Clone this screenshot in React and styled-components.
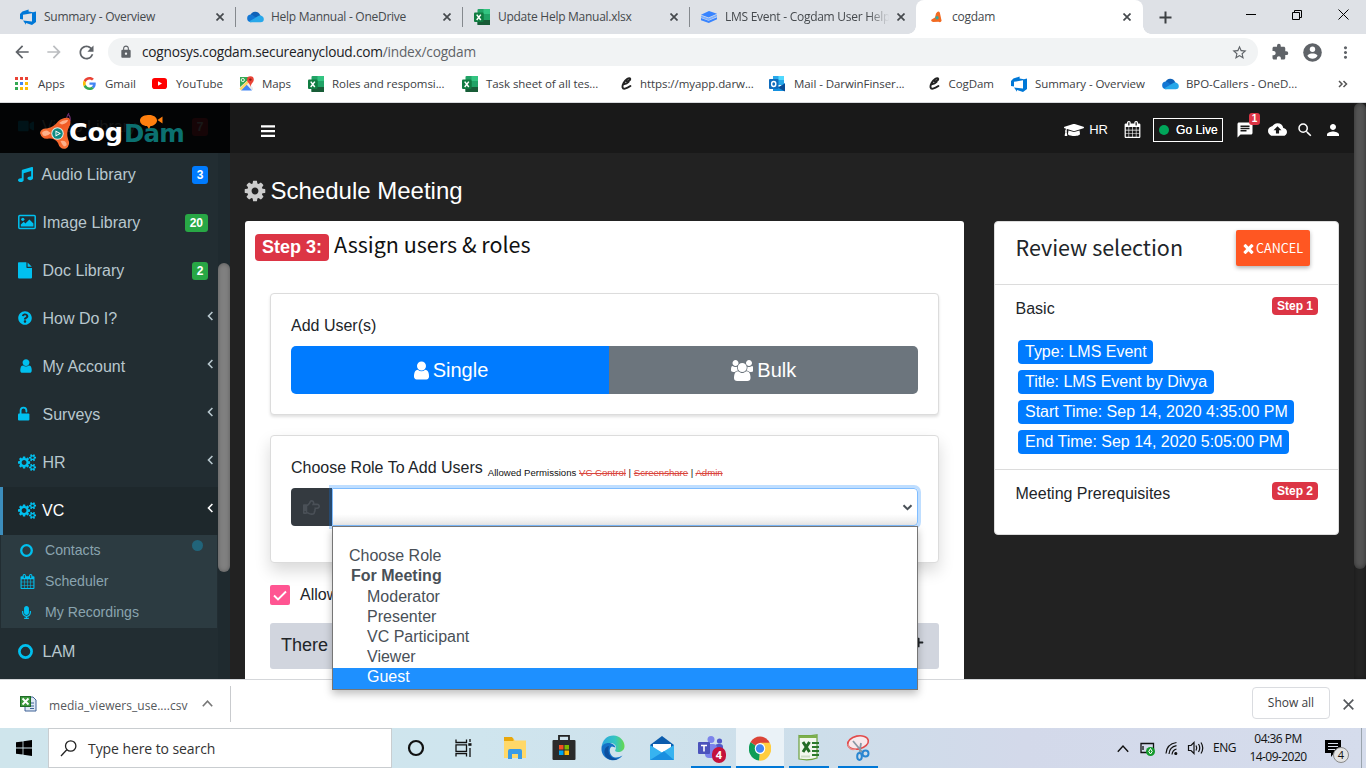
import React from "react";
import styled, { createGlobalStyle, css } from "styled-components";
import {
  FaVideo, FaMusic, FaQuestionCircle, FaMicrophone, FaGraduationCap,
  FaRegHandPointRight, FaPlus,
} from "react-icons/fa";
import {
  MdChat, MdBackup, MdSearch, MdPerson, MdLock, MdStarBorder, MdExtension,
  MdMoreVert, MdArrowBack, MdArrowForward, MdRefresh,
} from "react-icons/md";

const Global = createGlobalStyle`
  * { box-sizing: border-box; }
  html, body { margin: 0; padding: 0; overflow: hidden; }
  body { font-family: "Liberation Sans", Arial, sans-serif; }
  svg { display: block; flex: none; }
`;

const ui = css`font-family: "Open Sans", "Noto Sans", sans-serif;`;

const Screen = styled.div`
  width: 1366px;
  height: 768px;
  display: flex;
  flex-direction: column;
  overflow: hidden;
  background: #fff;
`;

/* ---------- icons ---------- */

const FA = {
  user: [1792, "M1536 1399q0 109-62.5 187t-150.5 78h-854q-88 0-150.5-78t-62.5-187q0-85 8.5-160.5t31.5-152 58.5-131 94-89 134.5-34.5q131 128 313 128t313-128q76 0 134.5 34.5t94 89 58.5 131 31.5 152 8.5 160.5zm-256-887q0 159-112.5 271.5t-271.5 112.5-271.5-112.5-112.5-271.5 112.5-271.5 271.5-112.5 271.5 112.5 112.5 271.5z"],
  cog: [1792, "M1152 896q0-106-75-181t-181-75-181 75-75 181 75 181 181 75 181-75 75-181zm512-109v222q0 12-8 23t-20 13l-185 28q-19 54-39 91 35 50 107 138 10 12 10 25t-9 23q-27 37-99 108t-94 71q-12 0-26-9l-138-108q-44 23-91 38-16 136-29 186-7 28-36 28h-222q-14 0-24.5-8.5t-11.5-21.5l-28-184q-49-16-90-37l-141 107q-10 9-25 9-14 0-25-11-126-114-165-168-7-10-7-23 0-12 8-23 15-21 51-66.5t54-70.5q-27-50-41-99l-183-27q-13-2-21-12.5t-8-23.5v-222q0-12 8-23t19-13l186-28q14-46 39-92-40-57-107-138-10-12-10-24 0-10 9-23 26-36 98.5-107.5t94.5-71.5q13 0 26 10l138 107q44-23 91-38 16-136 29-186 7-28 36-28h222q14 0 24.5 8.5t11.5 21.5l28 184q49 16 90 37l142-107q9-9 24-9 13 0 25 10 129 119 165 170 7 8 7 22 0 12-8 23-15 21-51 66.5t-54 70.5q26 50 41 98l183 28q13 2 21 12.5t8 23.5z"],
  cogs: [1920, "M896 896q0-106-75-181t-181-75-181 75-75 181 75 181 181 75 181-75 75-181zm768 512q0-52-38-90t-90-38-90 38-38 90q0 53 37.5 90.5t90.5 37.5 90.5-37.5 37.5-90.5zm0-1024q0-52-38-90t-90-38-90 38-38 90q0 53 37.5 90.5t90.5 37.5 90.5-37.5 37.5-90.5zm-384 421v185q0 10-7 19.5t-16 10.5l-155 24q-11 35-32 76 34 48 90 115 7 11 7 20 0 12-7 19-23 30-82.5 89.5t-78.5 59.5q-11 0-21-7l-115-90q-37 19-77 31-11 108-23 155-7 24-30 24h-186q-11 0-20-7.5t-10-17.5l-23-153q-34-10-75-31l-118 89q-7 7-20 7-11 0-21-8-144-133-144-160 0-9 7-19 10-14 41-53t47-61q-23-44-35-82l-152-24q-10-1-17-9.5t-7-19.5v-185q0-10 7-19.5t16-10.5l155-24q11-35 32-76-34-48-90-115-7-11-7-20 0-12 7-20 22-30 82-89t79-59q11 0 21 7l115 90q34-18 77-32 11-108 23-154 7-24 30-24h186q11 0 20 7.5t10 17.5l23 153q34 10 75 31l118-89q8-7 20-7 11 0 21 8 144 133 144 160 0 8-7 19-12 16-42 54t-45 60q23 48 34 82l152 23q10 2 17 10.5t7 19.5zm640 533v140q0 16-149 31-12 27-30 52 51 113 51 138 0 4-4 7-122 71-124 71-8 0-46-47t-52-68q-20 2-30 2t-30-2q-14 21-52 68t-46 47q-2 0-124-71-4-3-4-7 0-25 51-138-18-25-30-52-149-15-149-31v-140q0-16 149-31 13-29 30-52-51-113-51-138 0-4 4-7 4-2 35-20t59-34 30-16q8 0 46 46.5t52 67.5q20-2 30-2t30 2q51-71 92-112l6-2q4 0 124 70 4 3 4 7 0 25-51 138 17 23 30 52 149 15 149 31zm0-1024v140q0 16-149 31-12 27-30 52 51 113 51 138 0 4-4 7-122 71-124 71-8 0-46-47t-52-68q-20 2-30 2t-30-2q-14 21-52 68t-46 47q-2 0-124-71-4-3-4-7 0-25 51-138-18-25-30-52-149-15-149-31v-140q0-16 149-31 13-29 30-52-51-113-51-138 0-4 4-7 4-2 35-20t59-34 30-16q8 0 46 46.5t52 67.5q20-2 30-2t30 2q51-71 92-112l6-2q4 0 124 70 4 3 4 7 0 25-51 138 17 23 30 52 149 15 149 31z"],
  users: [1920, "M593 896q-162 5-265 128h-134q-82 0-138-40.5t-56-118.5q0-353 124-353 6 0 43.5 21t97.5 42.5 119 21.5q67 0 133-23-5 37-5 66 0 139 81 256zm1071 637q0 120-73 189.5t-194 69.5h-874q-121 0-194-69.5t-73-189.5q0-53 3.5-103.5t14-109 26.5-108.5 43-97.5 62-81 85.5-53.5 111.5-20q10 0 43 21.5t73 48 107 48 135 21.5 135-21.5 107-48 73-48 43-21.5q61 0 111.5 20t85.5 53.5 62 81 43 97.5 26.5 108.5 14 109 3.5 103.5zm-1024-1277q0 106-75 181t-181 75-181-75-75-181 75-181 181-75 181 75 75 181zm704 384q0 159-112.5 271.5t-271.5 112.5-271.5-112.5-112.5-271.5 112.5-271.5 271.5-112.5 271.5 112.5 112.5 271.5zm576 225q0 78-56 118.5t-138 40.5h-134q-103-123-265-128 81-117 81-256 0-29-5-66 66 23 133 23 59 0 119-21.5t97.5-42.5 43.5-21q124 0 124 353zm-128-609q0 106-75 181t-181 75-181-75-75-181 75-181 181-75 181 75 75 181z"],
  calendar: [1792, "M192 1664h288v-288h-288v288zm352 0h320v-288h-320v288zm-352-352h288v-320h-288v320zm352 0h320v-320h-320v320zm-352-384h288v-288h-288v288zm736 736h320v-288h-320v288zm-384-736h320v-288h-320v288zm768 736h288v-288h-288v288zm-384-352h320v-320h-320v320zm-352-864v-288q0-13-9.5-22.5t-22.5-9.5h-64q-13 0-22.5 9.5t-9.5 22.5v288q0 13 9.5 22.5t22.5 9.5h64q13 0 22.5-9.5t9.5-22.5zm736 864h288v-320h-288v320zm-384-384h320v-288h-320v288zm384 0h288v-288h-288v288zm32-480v-288q0-13-9.5-22.5t-22.5-9.5h-64q-13 0-22.5 9.5t-9.5 22.5v288q0 13 9.5 22.5t22.5 9.5h64q13 0 22.5-9.5t9.5-22.5zm384-64v1280q0 52-38 90t-90 38h-1408q-52 0-90-38t-38-90v-1280q0-52 38-90t90-38h128v-96q0-66 47-113t113-47h64q66 0 113 47t47 113v96h384v-96q0-66 47-113t113-47h64q66 0 113 47t47 113v96h128q52 0 90 38t38 90z"],
  times: [1792, "M1490 1322q0 40-28 68l-136 136q-28 28-68 28t-68-28l-294-294-294 294q-28 28-68 28t-68-28l-136-136q-28-28-28-68t28-68l294-294-294-294q-28-28-28-68t28-68l136-136q28-28 68-28t68 28l294 294 294-294q28-28 68-28t68 28l136 136q28 28 28 68t-28 68l-294 294 294 294q28 28 28 68z"],
};
const Fa4 = ({ name, size }) => (
  <svg width={(size * FA[name][0]) / 1792} height={size} viewBox={`0 0 ${FA[name][0]} 1792`} fill="currentColor">
    <path d={FA[name][1]} />
  </svg>
);

const PictureIcon = () => (
  <svg width="18" height="16" viewBox="0 0 18 16">
    <rect x="0.8" y="1.6" width="16.4" height="12.8" rx="1" fill="none" stroke="currentColor" strokeWidth="1.5" />
    <circle cx="4.8" cy="5.3" r="1.6" fill="currentColor" />
    <path d="M2.8 12.6v-2l3-2.8 1.6 1.6 4-4 4 4v3.2z" fill="currentColor" />
  </svg>
);
const UnlockIcon = () => (
  <svg width="12" height="16" viewBox="0 0 12 16">
    <path d="M2.6 8V4.6a2.9 2.9 0 0 1 5.8 0v1" fill="none" stroke="currentColor" strokeWidth="1.8" strokeLinecap="round" />
    <rect x="0" y="7.4" width="11.4" height="7.2" rx="1" fill="currentColor" />
  </svg>
);
const RingIcon = ({ size = 14 }) => (
  <svg width={size} height={size} viewBox="0 0 14 14">
    <circle cx="7" cy="7" r="5.7" fill="none" stroke="currentColor" strokeWidth="2.5" />
  </svg>
);
const FileIcon = () => (
  <svg width="14" height="17" viewBox="0 0 14 17" fill="currentColor">
    <path d="M0 1Q0 0.2 0.8 0.2H8.4V5.2Q8.4 6 9.2 6H14V15.6Q14 16.6 13 16.6H1Q0 16.6 0 15.6ZM9.6 0.4L13.8 4.8H9.6Z" />
  </svg>
);
const AngleLeft = () => (
  <svg width="7" height="10" viewBox="0 0 7 10">
    <path d="M5.4 1L1.5 5l3.9 4" fill="none" stroke="currentColor" strokeWidth="1.6" />
  </svg>
);
const DevOpsIcon = () => (
  <svg width="16" height="16" viewBox="0 0 16 16" fill="#0078d7">
    <path d="M0 5L2.4 2.6 8.6 0.6V2.5L13 3.3L16 2.5V13L12 16L6 14V15.8L3 11.6L12 12.4V4.3L3 5.8V10.5L0 10Z" />
  </svg>
);
const CloudIcon = () => (
  <svg width="17" height="12" viewBox="0 0 17 12">
    <path d="M3.4 4.2A5.2 5.2 0 0 1 13 3.8L15 8 3 10Z" fill="#0f62b8" />
    <path d="M0.2 7.6A3.6 3.6 0 0 1 5.6 4l7 5.5L3.6 11.2A3.6 3.6 0 0 1 0.2 7.6Z" fill="#1377d4" />
    <path d="M2 10.4L12.2 4.6A3.6 3.6 0 0 1 16.8 8a3.2 3.2 0 0 1-3.2 3.2H3.6Z" fill="#28a8ea" />
  </svg>
);
const ExcelIcon = () => (
  <svg width="16" height="16" viewBox="0 0 16 16">
    <rect x="3.5" y="0" width="12.5" height="16" rx="1" fill="#21a366" />
    <rect x="9.5" y="0" width="6.5" height="5" fill="#33c481" />
    <rect x="3.5" y="5" width="6" height="6" fill="#107c41" />
    <rect x="3.5" y="11" width="12.5" height="5" fill="#185c37" />
    <rect x="0" y="3.5" width="9.5" height="9.5" rx="1" fill="#107c41" />
    <path d="M2.7 5.6L6.8 11M6.8 5.6L2.7 11" stroke="#fff" strokeWidth="1.5" />
  </svg>
);
const BookIcon = () => (
  <svg width="16" height="12" viewBox="0 0 16 12">
    <path d="M8 0L16 2.8 7.6 6.4 0 3.8Z" fill="#3884ff" />
    <path d="M0 4.6L7.6 7.2 16 3.6V5.4L7.6 9.2 0 6.4Z" fill="#7db0ff" />
    <path d="M0 7L7.6 9.8 16 6.2V8.2L7.8 12 0 9.2Z" fill="#3884ff" />
  </svg>
);
const CogdamFav = () => (
  <svg width="11" height="12" viewBox="0 0 11 12">
    <path d="M5 2.4Q7.4 -1.2 8.8 1.6L10.6 9.8Q9.8 12 7.4 10.8L2 11Q-0.8 10 0.6 8.4L4 6.4Z" fill="#f26a21" />
    <circle cx="6" cy="6.8" r="1.7" fill="#35a7a0" />
  </svg>
);
const GoogleIcon = () => (
  <svg width="13" height="13" viewBox="0 0 48 48">
    <path fill="#EA4335" d="M24 9.5c3.5 0 6.700 1.200 9.200 3.600l6.900-6.900C35.900 2.400 30.500 0 24 0 14.600 0 6.500 5.400 2.600 13.200l8 6.200C12.400 13.700 17.700 9.500 24 9.500z" />
    <path fill="#4285F4" d="M47 24.500c0-1.600-.2-3.100-.4-4.500H24v9h12.900c-.6 3-2.200 5.500-4.800 7.200l7.700 6C44.400 38 47 31.800 47 24.500z" />
    <path fill="#FBBC05" d="M10.500 28.600a14.500 14.500 0 0 1 0-9.200l-8-6.200a24 24 0 0 0 0 21.600z" />
    <path fill="#34A853" d="M24 48c6.500 0 11.900-2.100 15.900-5.800l-7.700-6c-2.200 1.500-4.900 2.300-8.200 2.300-6.300 0-11.600-4.200-13.500-9.900l-8 6.200C6.500 42.600 14.600 48 24 48z" />
  </svg>
);
const YouTubeIcon = () => (
  <svg width="15" height="11" viewBox="0 0 15 11">
    <rect width="15" height="11" rx="2.8" fill="#f00" />
    <path d="M6 3.200V7.800L10 5.500Z" fill="#fff" />
  </svg>
);
const MapsIcon = () => (
  <svg width="15" height="15" viewBox="0 0 15 15">
    <path d="M1 1H12L1 12Z" fill="#34a853" />
    <path d="M1 13V11L8 5 14 12V14H2Z" fill="#e8eaed" />
    <path d="M2 14.500L7.500 8.500 13 14.500Z" fill="#4285f4" />
    <path d="M0.500 12.500L9.500 3.500 11 5.500 2 14.500Z" fill="#fdd663" />
    <path d="M8 3.600a3.400 3.400 0 0 1 6.800 0C14.800 6.500 11.900 7.500 11.600 11 11 7.500 8 6.500 8 3.600Z" fill="#ea4335" />
    <circle cx="11.400" cy="3.600" r="1.200" fill="#8c1b12" />
    <circle cx="3.800" cy="4" r="1.600" fill="none" stroke="#fff" strokeWidth="0.900" />
  </svg>
);
const OutlookIcon = () => (
  <svg width="16" height="16" viewBox="0 0 16 16">
    <rect x="4" y="0" width="11" height="9" fill="#28a8ea" />
    <rect x="9.500" y="0" width="5.500" height="4" fill="#50d9ff" />
    <path d="M4 7L10 11 16 7V15H4Z" fill="#1490df" />
    <path d="M9 11.500L16 7.500V15.500Z" fill="#0a4a94" />
    <rect x="0" y="3" width="9.500" height="10" rx="1" fill="#0f6cbd" />
    <ellipse cx="4.700" cy="8" rx="2.100" ry="2.500" fill="none" stroke="#fff" strokeWidth="1.400" />
  </svg>
);
const ScriptCIcon = () => (
  <svg width="11" height="13" viewBox="0 0 11 13">
    <path d="M5 3.600C6 5 9.600 3.500 9.200 1.800 8.600 0 4.400 2.400 2.600 6 0.600 10 1.400 12.200 4 11.600 6 11.200 8 10 9.400 9M2.600 7.200Q6 6.600 7.600 4.800" fill="none" stroke="#222" strokeWidth="1.900" strokeLinecap="round" />
  </svg>
);
const AccountIcon = () => (
  <svg width="19" height="19" viewBox="0 0 19 19">
    <circle cx="9.500" cy="9.500" r="9.300" fill="#5f6368" />
    <circle cx="9.500" cy="6.200" r="2.700" fill="#fff" />
    <path d="M4.400 12.800C5 11 7.700 10.500 9.500 10.500S14 11 14.600 12.800A6 6 0 0 1 4.400 12.800Z" fill="#fff" />
  </svg>
);
const AppsIcon = () => {
  const c = ["#ea4335", "#ea4335", "#ea4335", "#34a853", "#4285f4", "#fbbc05", "#34a853", "#fbbc05", "#fbbc05"];
  return (
    <svg width="13" height="13" viewBox="0 0 13 13">
      {c.map((f, i) => <rect key={i} x={(i % 3) * 5} y={Math.floor(i / 3) * 5} width="3" height="3" fill={f} />)}
    </svg>
  );
};
const CrossIcon = ({ size = 8, width = 1.700 }) => (
  <svg width={size} height={size} viewBox="0 0 8 8">
    <path d="M0.500 0.500L7.500 7.500M7.500 0.500L0.500 7.500" stroke="currentColor" strokeWidth={width} />
  </svg>
);

/* ---------- browser chrome ---------- */

const TabStrip = styled.div`
  ${ui}
  height: 34px;
  flex: none;
  display: flex;
  background: #dee1e6;
`;
const Tab = styled.div`
  width: ${(p) => (p.$first ? 236 : 227)}px;
  margin-left: ${(p) => (p.$active ? -1 : 0)}px;
  padding: 0 12px 0 ${(p) => (p.$first ? 20 : p.$active ? 15 : 11)}px;
  display: flex;
  align-items: center;
  color: #45494d;
  font-size: 12px;
  position: relative;
  ${(p) => p.$active && css`
    background: #fff;
    border-radius: 8px 8px 0 0;
    &::before, &::after {
      content: "";
      position: absolute;
      bottom: 0;
      width: 8px;
      height: 8px;
    }
    &::before { left: -8px; background: radial-gradient(circle at 0 0, #dee1e6 7.500px, #fff 8px); }
    &::after { right: -8px; background: radial-gradient(circle at 100% 0, #dee1e6 7.500px, #fff 8px); }
  `}
  ${(p) => p.$line && css`
    &::after {
      content: "";
      position: absolute;
      right: 0;
      top: 7px;
      width: 1px;
      height: 20px;
      background: #85898e;
    }
  `}
`;
const TabIcon = styled.span`
  width: ${(p) => (p.$active ? 21 : 24)}px;
  flex: none;
  display: flex;
`;
const TabTitle = styled.span`
  flex: 1;
  min-width: 0;
  overflow: hidden;
  white-space: nowrap;
  line-height: 20px;
  letter-spacing: -0.270px;
  margin-right: 8px;
  ${(p) => p.$fade && css`
    mask-image: linear-gradient(to right, #000 86%, transparent 99%);
    margin-right: 6px;
  `}
`;
const NewTab = styled.div`
  margin-left: 16px;
  width: 14px;
  display: flex;
  align-items: center;
  color: #3c4043;
`;
const WindowButtons = styled.div`
  margin-left: auto;
  padding-right: 17px;
  height: 29px;
  display: flex;
  align-items: center;
  gap: 36px;
`;

const Toolbar = styled.div`
  ${ui}
  height: 36px;
  flex: none;
  display: flex;
  align-items: center;
  padding: 0 10px 0 12px;
  color: #5f6368;
`;
const NavButtons = styled.div`
  width: 96px;
  display: flex;
  gap: 12px;
`;
const AddressBar = styled.div`
  width: 1150px;
  height: 28px;
  border-radius: 14px;
  background: #f1f3f4;
  display: flex;
  align-items: center;
  padding: 0 10px 0 11px;
  font-size: 13.700px;
  color: #5f6368;
`;
const Url = styled.span`
  margin-left: 9px;
  padding-bottom: 1px;
  flex: 1;
  letter-spacing: ${(p) => p.$ls};
  b { font-weight: 400; color: #202124; }
`;
const ToolIcons = styled.div`
  margin-left: 13px;
  display: flex;
  align-items: center;
  gap: 14px;
`;

const Bookmarks = styled.div`
  ${ui}
  height: 33px;
  flex: none;
  display: flex;
  align-items: center;
  padding: 0 0 5px 15px;
  border-bottom: 1px solid #d8dadd;
  font-size: 11.500px;
  color: #3c4043;
`;
const Bookmark = styled.div`
  width: ${(p) => p.$w}px;
  flex: none;
  display: flex;
  align-items: center;
  white-space: nowrap;
  letter-spacing: -0.070px;
`;
const BookmarkIcon = styled.span`
  width: ${(p) => p.$w}px;
  flex: none;
  display: flex;
`;

/* ---------- application shell ---------- */

const Page = styled.div`
  height: 576px;
  flex: none;
  display: flex;
  background: #222;
  position: relative;
  z-index: 1;
`;
const Sidebar = styled.aside`
  width: 230px;
  height: 576px;
  display: flex;
  background: #222d32;
  position: relative;
  overflow: hidden;
`;
const LogoBar = styled.div`
  position: absolute;
  inset: 0 0 auto 0;
  height: 50px;
  padding: 7px 0 0 38px;
  display: flex;
  background: rgba(0, 0, 0, 0.900);
  font: 700 25.500px/1 "DejaVu Sans", Verdana, sans-serif;
`;
const LogoText = styled.div`
  display: flex;
  align-items: baseline;
  padding-top: 9px;
  margin-left: -3px;
  height: 36px;
  line-height: 26px;
  color: #fff;
  letter-spacing: -0.200px;
  span {
    font-size: 24.500px;
    line-height: 28px;
    color: #0b7070;
    margin-left: 1px;
    letter-spacing: -0.700px;
    position: relative;
    top: 1px;
  }
`;
const LogoBubble = styled.div`
  position: absolute;
  left: 139px;
  top: 11px;
`;
const Menu = styled.nav`
  width: 218px;
`;
const MenuItem = styled.div`
  height: 48px;
  display: flex;
  align-items: center;
  padding: 0 10px 0 15px;
  border-left: 3px solid ${(p) => (p.$active ? "#3c8dbc" : "transparent")};
  background: ${(p) => (p.$active ? "#1e282c" : "transparent")};
  color: ${(p) => (p.$active ? "#fff" : "#b8c7ce")};
  font-size: 16px;
`;
const MenuIcon = styled.span`
  width: ${(p) => p.$w || 24}px;
  margin-bottom: ${(p) => p.$mb ?? 2}px;
  flex: none;
  display: flex;
  color: #00c0ef;
`;
const Count = styled.span`
  margin-left: auto;
  height: 18px;
  padding: 0 ${(p) => (p.$wide ? 5 : 4.500)}px;
  border-radius: 3px;
  background: ${(p) => p.$color};
  color: #fff;
  font: 700 12px/18px "Liberation Sans", Arial, sans-serif;
`;
const Arrow = styled.span`
  margin: 0 -6px 7px auto;
`;
const SubMenu = styled.div`
  margin: 0 1px 0 1px;
  height: 93px;
  background: #2c3b41;
`;
const SubItem = styled.div`
  height: 31px;
  padding: 0 14px 1px 19px;
  display: flex;
  align-items: center;
  font-size: 14.100px;
  color: #8aa4af;
`;
const Dot = styled.span`
  margin: 0 0 9px auto;
  width: 11px;
  height: 11px;
  border-radius: 50%;
  background: #21647a;
`;
const SideScroll = styled.div`
  width: 12px;
  margin-top: 50px;
  padding-top: 110px;
  background: #1f2a2f;
`;
const SideThumb = styled.div`
  height: 309px;
  border-radius: 6px;
  background: #808080;
  box-shadow: inset 0 0 4px rgba(0, 0, 0, 0.300);
`;
const Content = styled.main`
  width: 1124px;
  height: 576px;
  display: flex;
  flex-direction: column;
`;
const TopBar = styled.header`
  height: 50px;
  flex: none;
  background: #191919;
  display: flex;
  align-items: center;
  padding: 3px 12px 0 31px;
  color: #fff;
  font-size: 13px;
`;
const BarsIcon = styled.svg`
  margin-top: 3px;
`;
const TopNav = styled.div`
  margin-left: auto;
  display: flex;
  align-items: center;
`;
const NavItem = styled.div`
  display: flex;
  align-items: center;
  gap: 5px;
  margin-left: ${(p) => p.$ml || 0}px;
  position: relative;
`;
const GoLive = styled.div`
  margin-left: 12px;
  width: 70px;
  height: 24px;
  border: 1px solid #fff;
  display: flex;
  align-items: center;
  padding-left: 5px;
  gap: 7px;
  font-size: 12px;
  letter-spacing: 0.050px;
  text-shadow: 0 0 0.500px #fff;
  i { width: 10px; height: 10px; border-radius: 50%; background: #00a65a; }
`;
const ChatCount = styled.span`
  position: absolute;
  left: 13px;
  top: -8px;
  width: 11px;
  height: 12px;
  border-radius: 3px;
  background: #dc3545;
  font: 700 10px/12px "Liberation Sans", Arial, sans-serif;
  text-align: center;
`;
const PageTitle = styled.h1`
  margin: 0;
  height: 68px;
  flex: none;
  padding: 7px 0 0 13px;
  display: flex;
  align-items: center;
  gap: 3.500px;
  font-size: 24px;
  font-weight: 400;
  color: #fff;
  svg { color: #ccc; }
`;
const Columns = styled.div`
  display: flex;
  align-items: flex-start;
  gap: 30px;
  padding-left: 15px;
`;
const WizardCard = styled.section`
  width: 719px;
  height: 458px;
  border-radius: 3px 3px 0 0;
  background: #fff;
`;
const WizardHead = styled.div`
  height: 72px;
  padding: 13px 0 0 10px;
  display: flex;
  align-items: flex-start;
`;
const StepTag = styled.span`
  width: 74px;
  height: 27px;
  border-radius: 4px;
  background: #dc3545;
  color: #fff;
  font: 700 18px/26px "Liberation Sans", Arial, sans-serif;
  text-align: center;
`;
const WizardTitle = styled.h2`
  margin: -4px 0 0 5px;
  font: 400 21.500px/28px "Noto Sans CJK SC", "Noto Sans", sans-serif;
  color: #111;
`;
const Panel = styled.div`
  margin: 0 25px ${(p) => p.$mb}px;
  height: ${(p) => p.$h}px;
  border: 1px solid #dcdcdc;
  border-radius: 4px;
  padding: ${(p) => p.$pt}px 20px 0;
  color: #212529;
  font-size: 16px;
  background: #fff;
  box-shadow: ${(p) => (p.$raised ? "0 8px 16px rgba(0,0,0,.15)" : "0 2px 3px rgba(0,0,0,.12)")};
`;
const PanelLabel = styled.div`
  height: 20px;
  line-height: 22px;
  display: flex;
  margin-bottom: ${(p) => p.$mb}px;
`;
const Permissions = styled.small`
  margin: 5px 0 0 5px;
  font-size: 9.600px;
  color: #111;
  white-space: nowrap;
  s { color: #d9453d; }
`;
const ButtonGroup = styled.div`
  display: flex;
  height: 48px;
  border-radius: 5px;
  overflow: hidden;
`;
const ModeButton = styled.div`
  width: ${(p) => p.$w}px;
  padding-right: ${(p) => p.$pr || 0}px;
  display: flex;
  align-items: center;
  justify-content: center;
  gap: ${(p) => p.$gap}px;
  font-size: 20px;
  color: #fff;
  background: ${(p) => p.$color};
`;
const InputGroup = styled.div`
  display: flex;
  height: 38px;
  position: relative;
`;
const Addon = styled.div`
  width: 41px;
  border-radius: 4px 0 0 4px;
  background: #343a40;
  color: #4a5057;
  display: flex;
  align-items: center;
  justify-content: center;
`;
const SelectBox = styled.div`
  flex: 1;
  border: 1px solid #80bdff;
  border-radius: 0 4px 4px 0;
  box-shadow: 0 0 0 3px rgba(0, 123, 255, 0.250);
  background: linear-gradient(#fff 70%, #e8e8e8);
  display: flex;
  align-items: center;
  justify-content: flex-end;
  padding-right: 4px;
  color: #495057;
`;
const OptionList = styled.div`
  position: absolute;
  z-index: 5;
  left: 41px;
  top: 38px;
  width: 586px;
  height: 164px;
  padding-top: 19px;
  border: 1px solid #767676;
  background: #fff;
  box-shadow: 0 4px 8px rgba(0, 0, 0, 0.250);
  color: #495057;
`;
const Option = styled.div`
  height: ${(p) => (p.$selected ? 21 : 20)}px;
  line-height: ${(p) => (p.$selected ? 18 : 20)}px;
  padding-left: ${(p) => p.$indent}px;
  font-weight: ${(p) => (p.$bold ? 700 : 400)};
  ${(p) => p.$gap && css`margin-top: 1px;`}
  ${(p) => p.$selected && css`background: #1e90ff; color: #fff;`}
`;
const AllowRow = styled.div`
  margin: 0 25px 18px;
  height: 20px;
  display: flex;
  align-items: center;
  gap: 10px;
  font-size: 16px;
  color: #212529;
`;
const Check = styled.span`
  width: 20px;
  height: 20px;
  border-radius: 2px;
  background: #ff5592;
  display: flex;
  align-items: center;
  justify-content: center;
`;
const Notice = styled.div`
  margin: 0 25px;
  height: 46px;
  padding: 0 15px 2px 11px;
  border-radius: 3px;
  background: #d1d5de;
  display: flex;
  align-items: center;
  justify-content: space-between;
  font-size: 18px;
  color: #212529;
  svg { margin-bottom: 5px; }
`;

const ReviewCard = styled.section`
  width: 345px;
  height: 314px;
  border: 1px solid #dcdcdc;
  border-radius: 4px;
  background: #fff;
  color: #212529;
  font-size: 16px;
`;
const ReviewHead = styled.div`
  height: 63px;
  padding: 8px 28px 0 20.500px;
  border-bottom: 1px solid #dcdcdc;
  display: flex;
  justify-content: space-between;
`;
const ReviewTitle = styled.h2`
  margin: 3px 0 0;
  font: 400 21.500px/28px "Noto Sans CJK SC", "Noto Sans", sans-serif;
`;
const CancelButton = styled.div`
  width: 74px;
  height: 36px;
  border-radius: 2px;
  background: #ff5722;
  box-shadow: 0 2px 4px rgba(0, 0, 0, 0.300);
  color: #fff;
  display: flex;
  align-items: center;
  justify-content: center;
  font: 400 12.600px/36px "Noto Sans CJK SC", "Noto Sans", sans-serif;
  svg { margin-left: -2px; }
`;
const ReviewSection = styled.div`
  height: ${(p) => p.$h}px;
  padding: 12px 20px 0 20.500px;
  border-bottom: ${(p) => (p.$last ? "none" : "1px solid #dcdcdc")};
`;
const SectionHead = styled.div`
  display: flex;
  justify-content: space-between;
  align-items: flex-start;
  height: 43px;
  line-height: 24px;
`;
const StepBadge = styled.span`
  width: 46px;
  height: 18px;
  border-radius: 4px;
  background: #dc3545;
  color: #fff;
  font: 700 12px/18px "Liberation Sans", Arial, sans-serif;
  text-align: center;
`;
const Fact = styled.div`
  width: fit-content;
  height: 24px;
  margin: 0 0 6px 2.500px;
  padding: 0 6.500px 0 7px;
  border-radius: 4px;
  background: #007bff;
  color: #fff;
  line-height: 23px;
  letter-spacing: -0.015px;
  white-space: nowrap;
`;
const PageScroll = styled.div`
  width: 12px;
  background: #252525;
  box-shadow: inset 0 0 5px rgba(0, 0, 0, 0.400);
`;
const PageThumb = styled.div`
  height: 466px;
  border-radius: 6px;
  background: #555;
  box-shadow: inset 0 0 5px rgba(0, 0, 0, 0.450);
`;

/* ---------- download shelf and taskbar ---------- */

const Shelf = styled.div`
  ${ui}
  height: 49px;
  flex: none;
  border-top: 1px solid #d5d7da;
  display: flex;
  align-items: center;
  padding: 0 12px 0 20px;
  background: #fff;
  font-size: 12px;
  color: #55585c;
`;
const Download = styled.div`
  width: 211px;
  height: 36px;
  padding-bottom: 1px;
  display: flex;
  align-items: center;
  border-right: 1px solid #c9cbce;
  letter-spacing: ${(p) => p.$ls};
`;
const FileName = styled.span`
  width: 153px;
  margin-left: 12px;
  padding-top: 4px;
  white-space: nowrap;
`;
const ShowAll = styled.div`
  margin: 0 13px 2px auto;
  width: 78px;
  height: 32px;
  border: 1px solid #dadce0;
  border-radius: 4px;
  line-height: 30px;
  text-align: center;
  color: #3c4043;
`;
const Taskbar = styled.div`
  ${ui}
  height: 40px;
  flex: none;
  display: flex;
  align-items: center;
  background: linear-gradient(90deg, #cfe5ec 0, #cfe5ee 35%, #cddeea 60%, #d3d9ea 75%, #d5dcec 100%);
  color: #111;
`;
const StartButton = styled.div`
  width: 48px;
  display: flex;
  justify-content: center;
`;
const SearchBox = styled.div`
  width: 344px;
  height: 40px;
  background: #fff;
  border: 1px solid #c9cdd0;
  display: flex;
  align-items: center;
  padding-left: 11px;
  gap: 11px;
  font-size: 14px;
  letter-spacing: ${(p) => p.$ls};
  color: #333;
`;
const TaskSlot = styled.div`
  width: 49px;
  height: 40px;
  padding-right: ${(p) => p.$pr || 0}px;
  display: flex;
  align-items: center;
  justify-content: center;
  position: relative;
  background: ${(p) => (p.$active ? "linear-gradient(90deg, transparent 1px, #eaf2f7 1px)" : "none")};
  ${(p) => p.$open && css`
    &::after {
      content: "";
      position: absolute;
      bottom: 0;
      left: ${p.$active ? 1 : 5}px;
      right: ${p.$active ? 0 : 4}px;
      height: 2px;
      background: #0078d7;
    }
  `}
`;
const TeamsBadge = styled.span`
  position: absolute;
  left: 26px;
  top: 19px;
  width: 14px;
  height: 16px;
  border-radius: 8px;
  background: #c4123c;
  color: #fff;
  font-size: 11px;
  font-weight: 700;
  line-height: 16px;
  text-align: center;
`;
const Tray = styled.div`
  margin-left: auto;
  display: flex;
  align-items: center;
  font-size: 12px;
  height: 40px;
`;
const Lang = styled.span`
  margin: 0 7px 1px 7px;
  width: 27px;
  letter-spacing: -0.500px;
`;
const Clock = styled.div`
  width: 62px;
  text-align: center;
  line-height: 18px;
  padding-bottom: 1px;
  letter-spacing: -0.550px;
  font-size: 12px;
  white-space: nowrap;
`;
const ActionCenter = styled.div`
  width: 37px;
  height: 40px;
  margin: 0 4px 0 16px;
  padding-top: 12px;
  border-right: 1px solid #9aa4ad;
  position: relative;
  span {
    position: absolute;
    left: 8px;
    top: 19px;
    width: 16px;
    height: 16px;
    border: 1px solid #888;
    border-radius: 50%;
    background: #e3e3e3;
    font-size: 11px;
    line-height: 14px;
    text-align: center;
  }
`;

const tabs = [
  { t: "Summary - Overview", icon: <DevOpsIcon />, first: true },
  { t: "Help Mannual - OneDrive", icon: <CloudIcon />, line: true },
  { t: "Update Help Manual.xlsx", icon: <ExcelIcon />, line: true },
  { t: "LMS Event - Cogdam User Help", icon: <BookIcon />, fade: true },
  { t: "cogdam", icon: <CogdamFav />, active: true },
];
const bookmarks = [
  ["Apps", <AppsIcon />, 68, 23],
  ["Gmail", <GoogleIcon />, 69, 22],
  ["YouTube", <YouTubeIcon />, 87, 24],
  ["Maps", <MapsIcon />, 69, 23],
  ["Roles and respomsi...", <ExcelIcon />, 154, 24],
  ["Task sheet of all tes...", <ExcelIcon />, 159, 24],
  ["https://myapp.darw...", <ScriptCIcon />, 148, 19],
  ["Mail - DarwinFinser...", <OutlookIcon />, 160, 25],
  ["CogDam", <ScriptCIcon />, 82, 19.500],
  ["Summary - Overview", <DevOpsIcon />, 151, 24],
  ["BPO-Callers - OneD...", <CloudIcon />, 176, 24],
];

const Browser = () => (
  <>
    <TabStrip>
      {tabs.map((tab) => (
        <Tab key={tab.t} $first={tab.first} $active={tab.active} $line={tab.line || tab.first}>
          <TabIcon $active={tab.active}>{tab.icon}</TabIcon>
          <TabTitle $fade={tab.fade}>{tab.t}</TabTitle>
          <CrossIcon />
        </Tab>
      ))}
      <NewTab>
        <svg width="13" height="13" viewBox="0 0 13 13"><path d="M6.500 0.500V12.500M0.500 6.500H12.500" stroke="currentColor" strokeWidth="2" /></svg>
      </NewTab>
      <WindowButtons>
        <svg width="10" height="11" viewBox="0 0 10 11"><path d="M0 5.500H10" stroke="#000" /></svg>
        <svg width="10" height="10" viewBox="0 0 10 10"><path d="M0.500 2.500H7.500V9.500H0.500ZM2.500 2V0.500H9.500V7.500H8" fill="none" stroke="#000" /></svg>
        <svg width="11" height="11" viewBox="0 0 11 11"><path d="M0.500 0.500L10.500 10.500M10.500 0.500L0.500 10.500" stroke="#000" /></svg>
      </WindowButtons>
    </TabStrip>
    <Toolbar>
      <NavButtons>
        <MdArrowBack size={20} />
        <MdArrowForward size={20} color="#bbbdc0" />
        <MdRefresh size={21} />
      </NavButtons>
      <AddressBar>
        <MdLock size={14} />
        <Url $ls="-0.22px"><b>cognosys.cogdam.secureanycloud.com</b>/index/cogdam</Url>
        <MdStarBorder size={17} />
      </AddressBar>
      <ToolIcons>
        <MdExtension size={18} />
        <AccountIcon />
        <MdMoreVert size={19} />
      </ToolIcons>
    </Toolbar>
    <Bookmarks>
      {bookmarks.map(([t, icon, w, iw]) => (
        <Bookmark key={t} $w={w}><BookmarkIcon $w={iw}>{icon}</BookmarkIcon>{t}</Bookmark>
      ))}
      <svg width="10" height="8" viewBox="0 0 10 8"><path d="M1 1L4 4 1 7M5.500 1L8.500 4 5.500 7" fill="none" stroke="#555" strokeWidth="1.500" /></svg>
    </Bookmarks>
  </>
);

const LogoMark = () => (
  <svg width="34" height="42" viewBox="0 0 34 42">
    <defs>
      <linearGradient id="blade" x1="0" y1="0" x2="1" y2="1">
        <stop offset="0" stopColor="#ff8a4a" />
        <stop offset="0.500" stopColor="#f15a24" />
        <stop offset="1" stopColor="#ff7a3c" />
      </linearGradient>
    </defs>
    <path d="M30 12Q27 8 31 3M32 11Q33 7 30 4" fill="none" stroke="#6b2c6b" strokeWidth="1.200" />
    <path d="M2 23Q3 18 9 18.500Q16 17 20 11.500Q25 7 31 8Q34 12 31 17Q28 23 30 29Q33 35 28 38.500Q22 40 20 33Q17 28 11 28.500Q4 30 2 23Z" fill="url(#blade)" />
    <path d="M21 13Q25 9.500 30 10 29.500 13 24 14.500ZM4 23Q5 20.500 9 20.500L13 23Q9 27 5 25.500ZM22.500 31Q27 30 28 32.500 30 36 26 36.500 24 35 22.500 31Z" fill="#ffb08a" />
    <circle cx="19.500" cy="23.500" r="6.200" fill="#d9f0ec" />
    <circle cx="19.500" cy="23.500" r="5.200" fill="#0e8a82" />
    <path d="M17.500 20.500L23 23.500 17.500 26.500Z" fill="#fff" />
    <path d="M18.400 22L21.200 23.500 18.400 25Z" fill="#0e8a82" />
  </svg>
);

const menu = [
  ["Video Library", <FaVideo size={16} />, 24, "7", "#dc3545"],
  ["Audio Library", <FaMusic size={15} />, 23.500, "3", "#007bff"],
  ["Image Library", <PictureIcon />, 24.500, "20", "#28a745"],
  ["Doc Library", <FileIcon />, 24.500, "2", "#28a745"],
  ["How Do I?", <FaQuestionCircle size={14} />, 24.500],
  ["My Account", <Fa4 name="user" size={16} />, 24.500],
  ["Surveys", <UnlockIcon />, 24.500],
  ["HR", <Fa4 name="cogs" size={17} />, 24.500],
];

const AppSidebar = () => (
  <Sidebar>
    <Menu>
      {menu.map(([t, icon, w, n, c]) => (
        <MenuItem key={t}>
          <MenuIcon $w={w}>{icon}</MenuIcon>
          {t}
          {n ? <Count $color={c} $wide={n.length > 1}>{n}</Count> : <Arrow><AngleLeft /></Arrow>}
        </MenuItem>
      ))}
      <MenuItem $active>
        <MenuIcon><Fa4 name="cogs" size={17} /></MenuIcon>VC<Arrow><AngleLeft /></Arrow>
      </MenuItem>
      <SubMenu>
        <SubItem><MenuIcon $mb={0} $w={25}><RingIcon size={13} /></MenuIcon>Contacts<Dot /></SubItem>
        <SubItem><MenuIcon $mb={0} $w={25}><Fa4 name="calendar" size={15} /></MenuIcon>Scheduler</SubItem>
        <SubItem><MenuIcon $mb={0} $w={25}><FaMicrophone size={13} /></MenuIcon>My Recordings</SubItem>
      </SubMenu>
      <MenuItem><MenuIcon $w={24.500}><RingIcon size={15} /></MenuIcon>LAM</MenuItem>
    </Menu>
    <SideScroll><SideThumb /></SideScroll>
    <LogoBar>
      <LogoMark />
      <LogoText>Cog<span>Dam</span></LogoText>
      <LogoBubble>
        <svg width="25" height="16" viewBox="0 0 25 16" fill="#ff7f0e">
          <path d="M9 1C14 0.500 18 3 18 6.500S14 12 11.500 12L10 15 8 12C4 12 1 9.500 1 6.500S4 1.200 9 1ZM18.500 6L23.500 2.500V9.500Z" />
        </svg>
      </LogoBubble>
    </LogoBar>
  </Sidebar>
);

const options = [
  ["Choose Role", 16],
  ["For Meeting", 18],
  ["Moderator", 34],
  ["Presenter", 34],
  ["VC Participant", 34],
  ["Viewer", 34],
  ["Guest", 34],
];

export default function App() {
  return (
    <Screen>
      <Global />
      <Browser />
      <Page>
        <AppSidebar />
        <Content>
          <TopBar>
            <BarsIcon width="14" height="12" viewBox="0 0 14 12"><path d="M0 1.300H14M0 6.100H14M0 10.800H14" stroke="#fff" strokeWidth="2.300" /></BarsIcon>
            <TopNav>
              <NavItem><FaGraduationCap size={20} />HR</NavItem>
              <NavItem $ml={16}><Fa4 name="calendar" size={17} /></NavItem>
              <GoLive><i />Go Live</GoLive>
              <NavItem $ml={13}><MdChat size={18} /><ChatCount>1</ChatCount></NavItem>
              <NavItem $ml={14}><MdBackup size={19} /></NavItem>
              <NavItem $ml={9}><MdSearch size={18} /></NavItem>
              <NavItem $ml={10}><MdPerson size={18} /></NavItem>
            </TopNav>
          </TopBar>
          <PageTitle><Fa4 name="cog" size={24} />Schedule Meeting</PageTitle>
          <Columns>
            <WizardCard>
              <WizardHead>
                <StepTag>Step 3:</StepTag>
                <WizardTitle>Assign users &amp; roles</WizardTitle>
              </WizardHead>
              <Panel $h={122} $mb={20} $pt={21}>
                <PanelLabel $mb={11}>Add User(s)</PanelLabel>
                <ButtonGroup>
                  <ModeButton $w={318} $gap={1} $pr={1} $color="#007bff"><Fa4 name="user" size={21} />Single</ModeButton>
                  <ModeButton $w={309} $gap={4} $color="#6c757d"><Fa4 name="users" size={21} />Bulk</ModeButton>
                </ButtonGroup>
              </Panel>
              <Panel $h={128} $mb={22} $pt={21} $raised>
                <PanelLabel $mb={11}>
                  Choose Role To Add Users
                  <Permissions>Allowed Permissions <s>VC Control</s> | <s>Screenshare</s> | <s>Admin</s></Permissions>
                </PanelLabel>
                <InputGroup>
                  <Addon><FaRegHandPointRight size={17} /></Addon>
                  <SelectBox>
                    <svg width="11" height="7" viewBox="0 0 11 7"><path d="M1.500 1.200L5.500 5.200 9.500 1.200" fill="none" stroke="currentColor" strokeWidth="2" /></svg>
                  </SelectBox>
                  <OptionList>
                    {options.map(([t, indent], i) => (
                      <Option key={t} $indent={indent} $bold={i === 1} $gap={i === 2 || i === 6} $selected={i === 6}>{t}</Option>
                    ))}
                  </OptionList>
                </InputGroup>
              </Panel>
              <AllowRow>
                <Check>
                  <svg width="14" height="11" viewBox="0 0 14 11"><path d="M1 5.500L5 9.500 13 1.500" fill="none" stroke="#fff" strokeWidth="1.900" /></svg>
                </Check>
                Allow
              </AllowRow>
              <Notice>There<FaPlus size={11} /></Notice>
            </WizardCard>
            <ReviewCard>
              <ReviewHead>
                <ReviewTitle>Review selection</ReviewTitle>
                <CancelButton><Fa4 name="times" size={15} />CANCEL</CancelButton>
              </ReviewHead>
              <ReviewSection $h={185}>
                <SectionHead>Basic<StepBadge>Step 1</StepBadge></SectionHead>
                <Fact>Type: LMS Event</Fact>
                <Fact>Title: LMS Event by Divya</Fact>
                <Fact>Start Time: Sep 14, 2020 4:35:00 PM</Fact>
                <Fact>End Time: Sep 14, 2020 5:05:00 PM</Fact>
              </ReviewSection>
              <ReviewSection $h={64} $last>
                <SectionHead>Meeting Prerequisites<StepBadge>Step 2</StepBadge></SectionHead>
              </ReviewSection>
            </ReviewCard>
          </Columns>
        </Content>
        <PageScroll><PageThumb /></PageScroll>
      </Page>
      <Shelf>
        <Download $ls="0.03px">
          <svg width="17" height="18" viewBox="0 0 17 18">
            <path d="M5 2H13L16 5V16H5Z" fill="#dfe8f5" stroke="#3f6396" />
            <path d="M9 8H14M9 11H14M10 13.500H14" stroke="#3f6396" strokeWidth="1.200" />
            <rect x="0.500" y="1.500" width="10" height="10" fill="#3c9a3c" stroke="#1e6b28" />
            <path d="M2.500 3.500L8.500 9.500M8.500 3.500L2.500 9.500" stroke="#fff" strokeWidth="1.800" />
          </svg>
          <FileName>media_viewers_use....csv</FileName>
          <svg width="11" height="7" viewBox="0 0 11 7"><path d="M0.800 6.200L5.500 1.200 10.200 6.200" fill="none" stroke="#777" strokeWidth="1.600" /></svg>
        </Download>
        <ShowAll>Show all</ShowAll>
        <CrossIcon size={11} width={1.200} />
      </Shelf>
      <Taskbar>
        <StartButton>
          <svg width="16" height="16" viewBox="0 0 16 16" fill="#000"><path d="M0 2.300L6.600 1.400V7.600H0ZM7.400 1.300L16 0V7.600H7.400ZM0 8.400H6.600V14.600L0 13.700ZM7.400 8.400H16V16L7.400 14.700Z" /></svg>
        </StartButton>
        <SearchBox $ls="-0.08px">
          <svg width="17" height="17" viewBox="0 0 17 17" fill="none" stroke="#222" strokeWidth="1.300"><circle cx="10.700" cy="6" r="5.200" /><path d="M6.800 9.800L1 16" /></svg>
          Type here to search
        </SearchBox>
        <TaskSlot $pr={1}>
          <svg width="18" height="18" viewBox="0 0 18 18"><circle cx="9" cy="9" r="7" fill="none" stroke="#111" strokeWidth="2.200" /></svg>
        </TaskSlot>
        <TaskSlot $pr={4}>
          <svg width="17" height="18" viewBox="0 0 17 18" fill="none" stroke="#111" strokeWidth="1.300">
            <path d="M1 0.500V3.500H11.500V0.500M1 17.500V14.500H11.500V17.500M1 5.800H11.500V12.300H1ZM15 0V3M15 9V18" /><path d="M13.300 5.500H16.500" strokeWidth="2.600" />
          </svg>
        </TaskSlot>
        <TaskSlot>
          <svg width="22" height="22" viewBox="0 0 22 22">
            <path d="M0 1H9L11 3.500H22V21H0Z" fill="#ffd868" /><path d="M0 0H8L9.500 2V4H0Z" fill="#e8a70c" />
            <path d="M4 22V14Q4 12 6 12H16Q18 12 18 14V22H14V17H8V22Z" fill="#3a9be6" />
          </svg>
        </TaskSlot>
        <TaskSlot>
          <svg width="24" height="28" viewBox="0 0 24 28">
            <path d="M7 7V1.800H17V7" fill="none" stroke="#222" strokeWidth="1.800" /><rect x="0.500" y="6" width="23" height="20" rx="1" fill="#2b2b2b" />
            <rect x="7" y="11" width="4.500" height="4.500" fill="#f25022" /><rect x="12.500" y="11" width="4.500" height="4.500" fill="#7fba00" />
            <rect x="7" y="16.500" width="4.500" height="4.500" fill="#00a4ef" /><rect x="12.500" y="16.500" width="4.500" height="4.500" fill="#ffb900" />
          </svg>
        </TaskSlot>
        <TaskSlot>
          <svg width="24" height="26" viewBox="0 0 24 26">
            <defs>
              <linearGradient id="ea" x1="0" y1="0" x2="1" y2="0"><stop offset="0" stopColor="#2aa6e0" /><stop offset="0.600" stopColor="#35c5c0" /><stop offset="1" stopColor="#66d94a" /></linearGradient>
            </defs>
            <path d="M0.500 13C1 5 6 0.500 12.500 0.500 19 0.500 23.500 6 23.500 11 23.500 15 20.500 17 17 17 14.500 17 13.500 16 14.500 14.500 16 12 14 8 10 8 5 8 1 10 0.500 13Z" fill="url(#ea)" />
            <path d="M0.500 13C1 9 5 7.500 9 8 12 8.500 14 10.500 14.500 12.500L11 11.500C8 12.500 8 18 11 21 14 23.500 18 22.500 21.500 20.500 19 24 15 25.600 11 25.200 4 24.500 0 19 0.500 13Z" fill="#1371c7" />
            <path d="M8 11C6 17 9 25 17 23.500 14 26 8 25.500 5 22 2 18 3 12 8 11Z" fill="#0c4f9e" />
          </svg>
        </TaskSlot>
        <TaskSlot>
          <svg width="24" height="25" viewBox="0 0 24 25">
            <path d="M0 9L12 0 24 9V23H0Z" fill="#0b5cad" /><path d="M3 8H21V18H3Z" fill="#fff" />
            <path d="M0 9L12 16.500 24 9V24H0Z" fill="#37b3f0" /><path d="M0 24L14 15.300 24 24Z" fill="#1a8fe0" />
          </svg>
        </TaskSlot>
        <TaskSlot $open>
          <svg width="26" height="26" viewBox="0 0 26 26">
            <circle cx="13" cy="4.500" r="3.500" fill="#7b83eb" /><circle cx="21.500" cy="6" r="2.600" fill="#5059c9" />
            <rect x="17" y="9" width="8" height="11" rx="3" fill="#5059c9" /><rect x="7" y="9" width="12" height="14" rx="4" fill="#7b83eb" />
            <rect x="0" y="7" width="12" height="12" rx="1" fill="#4b53bc" /><path d="M3 10.500H9M6 10.500V16.500" stroke="#fff" strokeWidth="1.600" />
          </svg>
          <TeamsBadge>4</TeamsBadge>
        </TaskSlot>
        <TaskSlot $open $active>
          <svg width="22" height="25" viewBox="0 0 24 26" preserveAspectRatio="none">
            <path d="M12 13L1.600 6.500A12.200 12.500 0 0 1 22.600 6.800Z" fill="#db4437" />
            <path d="M12 13L22.600 6.800A12.300 12.600 0 0 1 11 25.600Z" fill="#ffcd40" />
            <path d="M12 13L11 25.600A12.300 12.600 0 0 1 1.600 6.500Z" fill="#0f9d58" />
            <path d="M12 7H22.700L17.500 15 11 25.600 14 18Z" fill="#ffcd40" />
            <circle cx="12" cy="13" r="5.700" fill="#fff" /><circle cx="12" cy="13" r="4.500" fill="#4285f4" />
          </svg>
        </TaskSlot>
        <TaskSlot $open>
          <svg width="24" height="28" viewBox="0 0 24 28">
            <path d="M2 1.500Q12 2 20 0.800V24Q12 27 2 25Z" fill="#f2f7ee" stroke="#6ca03c" strokeWidth="1.200" />
            <path d="M2 1.500H20V4H2Z" fill="#7db04c" />
            <path d="M15 9H22M15 13H22M15 17H22M15 21H22" stroke="#2c7a2c" strokeWidth="2.200" />
            <path d="M6 8L12.500 18M12.500 8L6 18" stroke="#236b25" strokeWidth="3" />
            <path d="M4 22.500H13" stroke="#cfdcc8" strokeWidth="2" />
          </svg>
        </TaskSlot>
        <TaskSlot $open>
          <svg width="24" height="28" viewBox="0 0 24 28">
            <ellipse cx="12" cy="8.500" rx="10.500" ry="6.500" fill="#f7e9ec" stroke="#e24b4b" strokeWidth="1.600" transform="rotate(-12 12 8.500)" />
            <path d="M2 10Q3 17 10 15" fill="none" stroke="#e88b8b" strokeWidth="1.500" />
            <path d="M7 7L17 19M15 9L13.500 19" stroke="#8a98a5" strokeWidth="1.800" />
            <circle cx="19.500" cy="19.500" r="3" fill="none" stroke="#2a86d1" strokeWidth="2" /><ellipse cx="13.500" cy="22.500" rx="2.300" ry="3.400" fill="none" stroke="#2a86d1" strokeWidth="2" />
          </svg>
        </TaskSlot>
        <Tray>
          <svg width="12" height="9" viewBox="0 0 12 9"><path d="M0.800 7.800L6 2 11.200 7.800" fill="none" stroke="#111" strokeWidth="1.400" /></svg>
          <svg width="30" height="18" viewBox="0 0 30 18">
            <path d="M12 4.500H24.500V13.500H12V4.500ZM14 7V11" fill="none" stroke="#111" strokeWidth="1.300" />
            <circle cx="21.500" cy="12.500" r="4.500" fill="#149a2c" /><path d="M21.500 9.500L19.800 12.500 21.500 15 23.200 12.500Z" fill="none" stroke="#fff" />
          </svg>
          <svg width="21" height="16" viewBox="0 0 21 16" fill="none" stroke="#111" strokeWidth="1.200">
            <path d="M7 13.500Q7.500 4 17.500 2.500M10 14Q10.500 7 17.500 5.700M13 14.500Q13.500 10 17.500 9" /><circle cx="16.800" cy="13.500" r="1" fill="#111" />
          </svg>
          <svg width="26" height="16" viewBox="0 0 26 16" fill="none" stroke="#111" strokeWidth="1.200">
            <path d="M8.500 5.500H11L14 2.500V13.500L11 10.500H8.500ZM16 5.500Q17.500 8 16 10.500M18.500 4Q21 8 18.500 12M21 2.500Q24.500 8 21 13.500" />
          </svg>
          <Lang>ENG</Lang>
          <Clock>04:36 PM<br />14-09-2020</Clock>
          <ActionCenter>
            <svg width="17" height="18" viewBox="0 0 17 18"><path d="M0 0H16V13H9L6 17V13H0Z" fill="#000" /><path d="M3 3.500H13M3 6.500H13M3 9.500H10" stroke="#d8dde8" strokeWidth="1.200" /></svg>
            <span>4</span>
          </ActionCenter>
        </Tray>
      </Taskbar>
    </Screen>
  );
}
